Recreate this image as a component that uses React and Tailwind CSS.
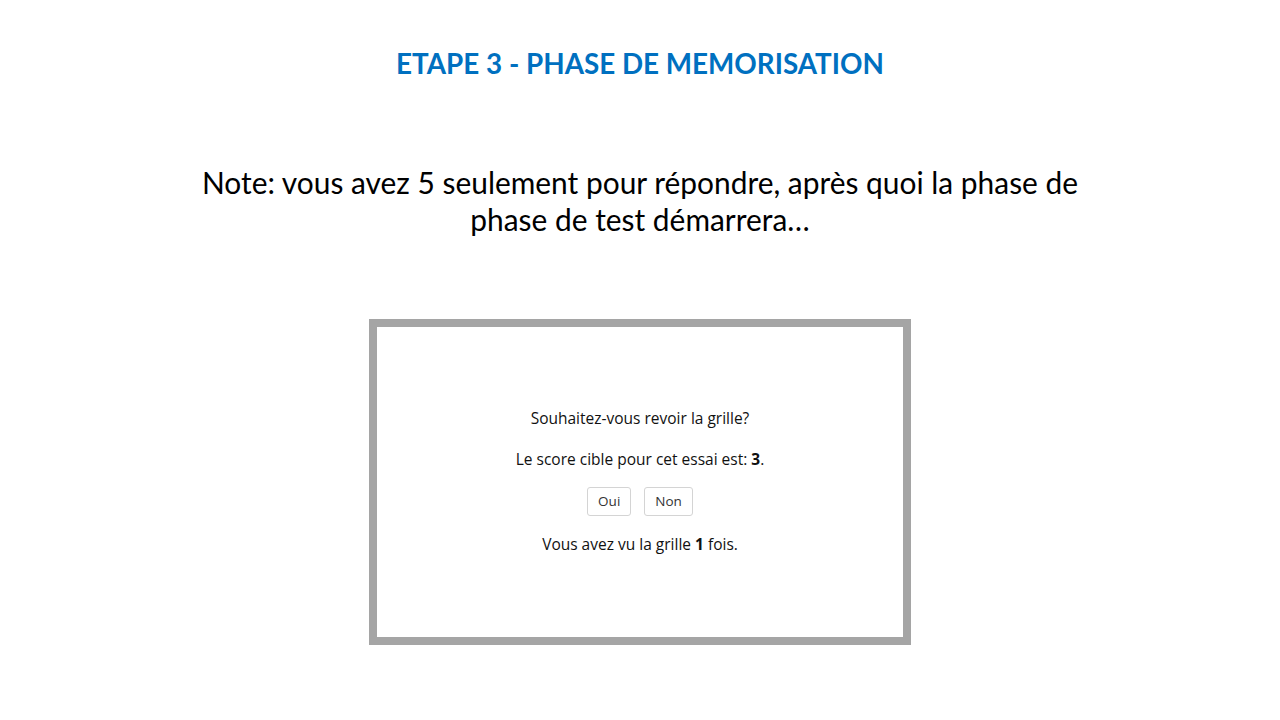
import React from 'react';

const App = () => {
  return (
    <div className="w-[1280px] h-[720px] bg-white flex flex-col items-center overflow-hidden" style={{ fontFamily: 'Lato, "Open Sans", sans-serif' }}>
      <h1 className="mt-[46px] text-[27.8px] leading-[36px] font-bold text-[#0070c0]">
        ETAPE 3 - PHASE DE MEMORISATION
      </h1>
      <p className="mt-[82px] text-[29.9px] leading-[37px] text-black text-center">
        Note: vous avez 5 seulement pour répondre, après quoi la phase de
        <br />
        phase de test démarrera…
      </p>
      <div className="mt-[81px] w-[542px] h-[326px] border-[8px] border-[#a5a5a5] bg-white flex flex-col items-center pt-[80px] text-[#111] text-[15.5px]" style={{ fontFamily: '"Open Sans", sans-serif' }}>
        <p className="leading-[22px]">Souhaitez-vous revoir la grille?</p>
        <p className="mt-[19px] leading-[22px]">
          Le score cible pour cet essai est: <b>3</b>.
        </p>
        <div className="mt-[17px] flex gap-[13px]">
          <button className="h-[29px] px-[10px] text-[13.5px] text-[#333] border border-[#d4d4d4] rounded-[3px] bg-white">Oui</button>
          <button className="h-[29px] px-[10px] text-[13.5px] text-[#333] border border-[#d4d4d4] rounded-[3px] bg-white">Non</button>
        </div>
        <p className="mt-[17px] leading-[22px]">
          Vous avez vu la grille <b>1</b> fois.
        </p>
      </div>
    </div>
  );
};

export default App;
